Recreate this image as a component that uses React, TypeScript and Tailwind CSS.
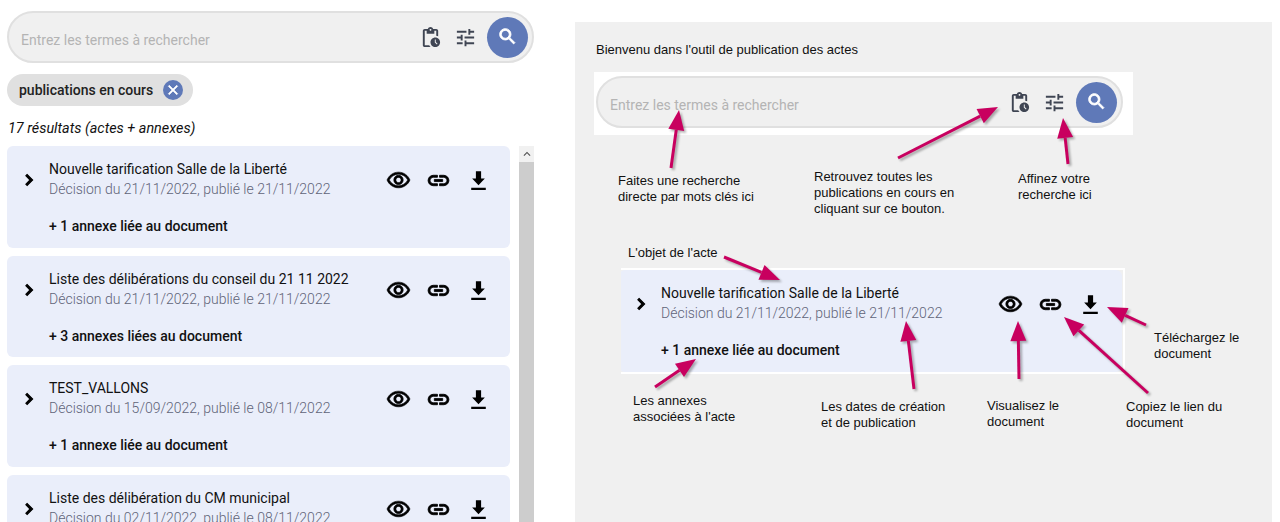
import { MdOutlinePendingActions, MdTune, MdKeyboardArrowUp } from "react-icons/md";

const results = [
  { title: "Nouvelle tarification Salle de la Liberté", date: "Décision du 21/11/2022, publié le 21/11/2022", annexes: "+ 1 annexe liée au document" },
  { title: "Liste des délibérations du conseil du 21 11 2022", date: "Décision du 21/11/2022, publié le 21/11/2022", annexes: "+ 3 annexes liées au document" },
  { title: "TEST_VALLONS", date: "Décision du 15/09/2022, publié le 08/11/2022", annexes: "+ 1 annexe liée au document" },
  { title: "Liste des délibération du CM municipal", date: "Décision du 02/11/2022, publié le 08/11/2022", annexes: "+ 1 annexe liée au document" },
];

// tail x, tail y, tip x, tip y (page coordinates minus the panel origin)
const arrows = [
  [96, 146, 104, 88],
  [323, 136, 423, 85],
  [493, 142, 488, 96],
  [149, 235, 205, 258],
  [80, 365, 121, 337],
  [339, 367, 331, 299],
  [444, 357, 443, 299],
  [573, 371, 489, 295],
  [571, 303, 532, 285],
];

const notes = [
  { left: 43, top: 151, lines: ["Faites une recherche", "directe par mots clés ici"] },
  { left: 239, top: 147, lines: ["Retrouvez toutes les", "publications en cours en", "cliquant sur ce bouton."] },
  { left: 443, top: 149, lines: ["Affinez votre", "recherche ici"] },
  { left: 53, top: 223, lines: ["L'objet de l'acte"] },
  { left: 58, top: 371, lines: ["Les annexes", "associées à l'acte"] },
  { left: 246, top: 377, lines: ["Les dates de création", "et de publication"] },
  { left: 412, top: 376, lines: ["Visualisez le", "document"] },
  { left: 551, top: 377, lines: ["Copiez le lien du", "document"] },
  { left: 579, top: 308, lines: ["Téléchargez le", "document"] },
];

const paths = {
  search: "M15.5 14h-.79l-.28-.27C15.41 12.59 16 11.11 16 9.5 16 5.91 13.09 3 9.5 3S3 5.91 3 9.5 5.91 16 9.5 16c1.61 0 3.09-.59 4.23-1.57l.27.28v.79l5 4.99L20.49 19l-4.99-5zm-6 0C7.01 14 5 11.99 5 9.5S7.01 5 9.5 5 14 7.01 14 9.5 11.99 14 9.5 14z",
  chevron: "M10 6L8.59 7.41 13.17 12l-4.58 4.59L10 18l6-6z",
  close: "M19 6.41L17.59 5 12 10.59 6.41 5 5 6.41 10.59 12 5 17.59 6.41 19 12 13.41 17.59 19 19 17.59 13.41 12z",
  link: "M3.9 12c0-1.71 1.39-3.1 3.1-3.1h4V7H7c-2.76 0-5 2.24-5 5s2.24 5 5 5h4v-1.9H7c-1.71 0-3.1-1.39-3.1-3.1zM8 13h8v-2H8v2zm9-6h-4v1.9h4c1.71 0 3.1 1.39 3.1 3.1s-1.39 3.1-3.1 3.1h-4V17h4c2.76 0 5-2.24 5-5s-2.24-5-5-5z",
  eye: "M12 6c3.79 0 7.17 2.13 8.82 5.5C19.17 14.87 15.79 17 12 17s-7.17-2.13-8.82-5.5C4.83 8.13 8.21 6 12 6m0-2C7 4 2.73 7.11 1 11.5 2.73 15.89 7 19 12 19s9.27-3.11 11-7.5C21.27 7.11 17 4 12 4zm0 5c1.38 0 2.5 1.12 2.5 2.5S13.38 14 12 14s-2.5-1.12-2.5-2.5S10.62 9 12 9m0-2c-2.48 0-4.5 2.02-4.5 4.5S9.52 16 12 16s4.5-2.02 4.5-4.5S14.48 7 12 7z",
  download: "M9.5 3h5v7h3.6L12 16.6 5.9 10h3.6V3zM5 19h14v2.2H5z",
};

function Glyph({ d, weight = 0, className }: { d: string; weight?: number; className: string }) {
  return (
    <svg viewBox="0 0 24 24" className={className} fill="currentColor" stroke="currentColor" strokeWidth={weight}>
      <path d={d} />
    </svg>
  );
}

function SearchBar() {
  return (
    <div className="flex h-[52px] w-[527px] items-center rounded-full border-2 border-[#e0e0e0] bg-[#f0f0f0] pl-[12px] pr-[4px]">
      <span className="mt-[7px] flex-1 text-[14px] text-[#b4b4b4]">Entrez les termes à rechercher</span>
      <MdOutlinePendingActions className="mr-[12px] h-[23px] w-[23px] text-[#3f4553]" />
      <MdTune className="mr-[10px] h-[23px] w-[23px] text-[#3f4553]" />
      <div className="flex h-[41px] w-[41px] items-center justify-center rounded-full bg-[#5f79b8]">
        <Glyph d={paths.search} weight={1} className="-mt-[2px] h-[21px] w-[21px] text-white" />
      </div>
    </div>
  );
}

function ResultCard({ title, date, annexes }: { title: string; date: string; annexes: string }) {
  return (
    <div className="flex h-[101.7px] w-[503px] shrink-0 items-start rounded-[6px] bg-[#eaeefa] pl-[11px] pr-[19px] pt-[13px]">
      <Glyph d={paths.chevron} weight={1.2} className="mt-[10px] h-[22px] w-[22px] text-black" />
      <div className="ml-[9px] flex-1">
        <div className="text-[14px] leading-[20px] text-[#111]">{title}</div>
        <div className="text-[14px] font-light leading-[20px] text-[#5f6478]">{date}</div>
        <div className="mt-[18px] text-[14px] font-medium leading-[18px] text-[#111]">{annexes}</div>
      </div>
      <div className="mt-[9px] flex items-center gap-[15px]">
        <Glyph d={paths.eye} weight={0.6} className="h-[25px] w-[25px] text-black" />
        <Glyph d={paths.link} weight={0.8} className="h-[25px] w-[25px] text-black" />
        <Glyph d={paths.download} className="h-[25px] w-[25px] text-black" />
      </div>
    </div>
  );
}

function ArrowLayer() {
  return (
    <svg className="absolute left-0 top-0 h-[500px] w-[697px] drop-shadow-[2px_2px_1px_rgba(0,0,0,0.3)]" viewBox="0 0 697 500">
      {arrows.map(([x1, y1, x2, y2]) => {
        const len = Math.hypot(x2 - x1, y2 - y1);
        const ux = (x2 - x1) / len;
        const uy = (y2 - y1) / len;
        const bx = x2 - ux * 20;
        const by = y2 - uy * 20;
        const head = `${x2},${y2} ${bx - uy * 8},${by + ux * 8} ${bx + uy * 8},${by - ux * 8}`;
        return (
          <g key={`${x1}-${y1}`}>
            <line x1={x1} y1={y1} x2={bx} y2={by} stroke="#c8005f" strokeWidth={3} />
            <polygon points={head} fill="#c8005f" />
          </g>
        );
      })}
    </svg>
  );
}

export default function App() {
  return (
    <div className="flex h-[522px] w-[1280px] overflow-hidden bg-white font-['Roboto',sans-serif]">
      <div className="w-[575px] shrink-0 pl-[7px] pt-[11px]">
        <SearchBar />
        <div className="mt-[11px] flex h-[32px] w-[186px] items-center rounded-full bg-[#e0e0e0] pl-[12px]">
          <span className="text-[14px] font-medium text-[#222]">publications en cours</span>
          <div className="ml-[10px] flex h-[20px] w-[20px] items-center justify-center rounded-full bg-[#5f79b8]">
            <Glyph d={paths.close} weight={1} className="h-[16px] w-[16px] text-white" />
          </div>
        </div>
        <div className="mt-[13px] pl-[1px] text-[14.4px] italic leading-[20px] text-[#111]">17 résultats (actes + annexes)</div>
        <div className="mt-[7px] flex">
          <div className="flex w-[503px] flex-col gap-[8px]">
            {results.map((r) => (
              <ResultCard key={r.title} {...r} />
            ))}
          </div>
          <div className="ml-[9px] flex h-[376px] w-[15px] flex-col bg-[#f1f1f1]">
            <div className="flex h-[16px] items-center justify-center">
              <MdKeyboardArrowUp className="h-[14px] w-[14px] text-[#505050]" />
            </div>
            <div className="flex-1 bg-[#cdcdcd]" />
          </div>
        </div>
      </div>
      <div className="relative mt-[22px] h-[500px] w-[697px] shrink-0 bg-[#f0f0f0] pt-[19px] font-['Liberation_Sans',sans-serif] text-[13px] text-[#111]">
        <div className="ml-[21px] leading-[17px]">Bienvenu dans l'outil de publication des actes</div>
        <div className="ml-[19px] mt-[14px] w-[539px] bg-white pb-[7px] pl-[2px] pt-[4px] font-['Roboto',sans-serif]">
          <SearchBar />
        </div>
        <div className="ml-[46px] mt-[133px] w-[504px] overflow-hidden border-y-2 border-r-2 border-white font-['Roboto',sans-serif]">
          <div className="-ml-[2px]">
            <ResultCard title={results[0].title} date={results[0].date} annexes={results[0].annexes} />
          </div>
        </div>
        <ArrowLayer />
        {notes.map((n) => (
          <div key={n.left} className="absolute leading-[16px]" style={{ left: n.left, top: n.top }}>
            {n.lines.map((l) => (
              <div key={l}>{l}</div>
            ))}
          </div>
        ))}
      </div>
    </div>
  );
}
